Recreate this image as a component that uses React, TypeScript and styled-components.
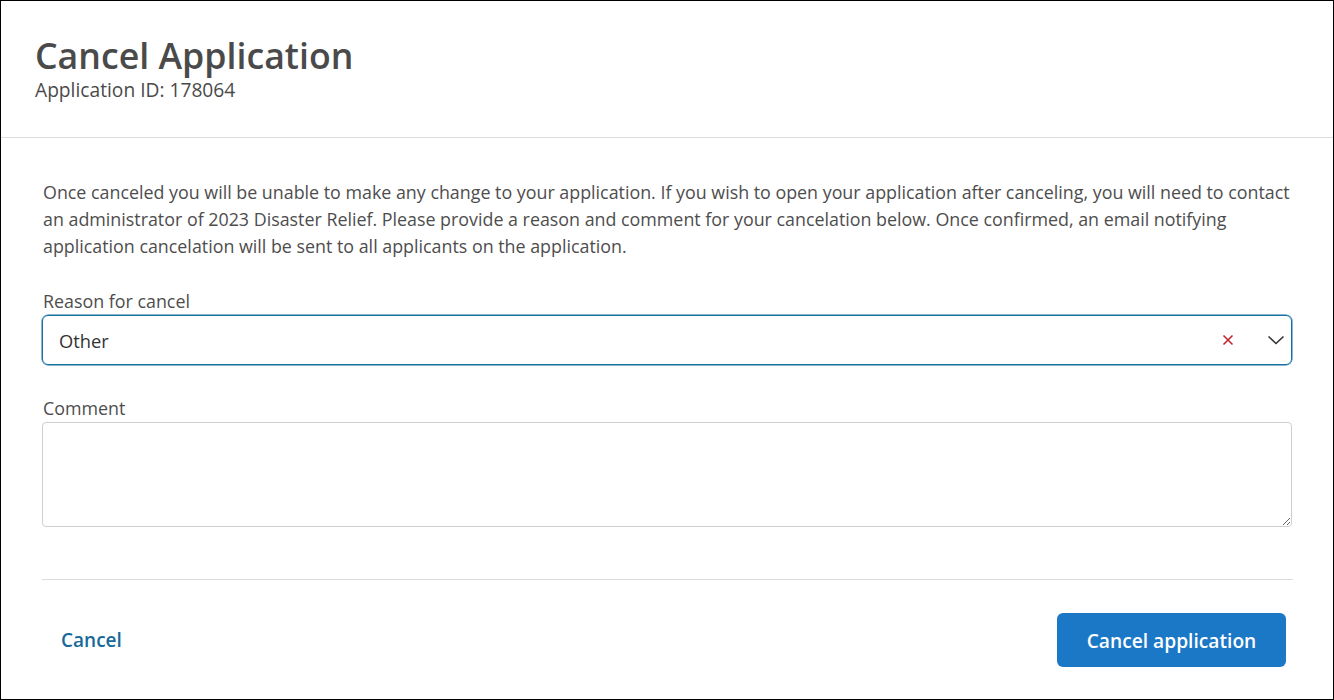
import React from "react";
import styled, { createGlobalStyle } from "styled-components";

const Global = createGlobalStyle`
  html, body { margin: 0; padding: 0; background: #fff; }
  body { font-family: "Open Sans", "Noto Sans", sans-serif; }
  * { box-sizing: border-box; }
`;

const Frame = styled.div`
  width: 1334px;
  height: 700px;
  border: 1px solid #000;
  display: flex;
  flex-direction: column;
  background: #fff;
`;

const Header = styled.header`
  padding: 31px 34px 0 34px;
  height: 137px;
  border-bottom: 1px solid #dcdcdc;
`;

const Title = styled.h1`
  margin: 0;
  font-size: 35.7px;
  line-height: 46px;
  font-weight: 600;
  color: #4a4a4a;
`;

const SubTitle = styled.div`
  font-size: 19.2px;
  line-height: 24px;
  color: #4a4a4a;
`;

const Body = styled.main`
  padding: 41px 41px 0 41px;
  display: flex;
  flex-direction: column;
`;

const Message = styled.p`
  margin: 0 0 0 1px;
  font-size: 17.85px;
  line-height: 27px;
  color: #4d4d4d;
`;

const Field = styled.div`
  display: flex;
  flex-direction: column;
  margin-top: ${(p: { $top: number }) => p.$top}px;
`;

const Label = styled.label`
  font-size: 17.85px;
  line-height: 22px;
  color: #4d4d4d;
  margin: 0 0 3px 1px;
`;

const Select = styled.div`
  height: 50px;
  border: 1px solid #1670a0;
  border-radius: 6px;
  display: flex;
  align-items: center;
  padding: 0 6px 0 16px;
  box-shadow: 0 0 0 0.5px #1670a0;
`;

const SelectValue = styled.span`
  flex: 1;
  font-size: 18.3px;
  color: #333;
`;

const IconBtn = styled.span`
  display: flex;
  align-items: center;
  justify-content: center;
  margin-left: ${(p: { $gap: number }) => p.$gap}px;
`;

const TextArea = styled.textarea`
  height: 105px;
  margin-left: 0;
  width: 1250px;
  border: 1px solid #cfcfcf;
  border-radius: 4px;
  resize: vertical;
  font-family: inherit;
  font-size: 17px;
  outline: none;
`;

const Divider = styled.hr`
  margin: 52px 0 0 0;
  width: 1251px;
  border: none;
  border-top: 1px solid #dcdcdc;
`;

const Footer = styled.footer`
  display: flex;
  justify-content: space-between;
  align-items: center;
  padding: 33px 6px 0 1px;
`;

const LinkButton = styled.button`
  background: none;
  border: none;
  padding: 0 18px;
  font-family: inherit;
  font-size: 19px;
  font-weight: 600;
  color: #17699a;
  cursor: pointer;
`;

const PrimaryButton = styled.button`
  width: 229px;
  height: 54px;
  background: #1b78c6;
  color: #fff;
  border: none;
  border-radius: 6px;
  font-family: inherit;
  font-size: 19.2px;
  font-weight: 600;
  cursor: pointer;
`;

export default function App() {
  return (
    <>
      <Global />
      <Frame>
        <Header>
          <Title>Cancel Application</Title>
          <SubTitle>Application ID: 178064</SubTitle>
        </Header>
        <Body>
          <Message>
            Once canceled you will be unable to make any change to your application. If you wish to open your application after canceling, you will need to contact an administrator of 2023 Disaster Relief. Please provide a reason and comment for your cancelation below. Once confirmed, an email notifying application cancelation will be sent to all applicants on the application.
          </Message>
          <Field $top={30}>
            <Label>Reason for cancel</Label>
            <Select>
              <SelectValue>Other</SelectValue>
              <IconBtn $gap={0}>
                <svg width="12" height="12" viewBox="0 0 12 12">
                  <path d="M1.5 1.5 L10.5 10.5 M10.5 1.5 L1.5 10.5" stroke="#c0282d" strokeWidth="1.6" fill="none" />
                </svg>
              </IconBtn>
              <IconBtn $gap={33}>
                <svg width="18" height="10" viewBox="0 0 18 10">
                  <path d="M1.5 1.5 L9 8.5 L16.5 1.5" stroke="#333" strokeWidth="1.6" fill="none" />
                </svg>
              </IconBtn>
            </Select>
          </Field>
          <Field $top={32}>
            <Label>Comment</Label>
            <TextArea />
          </Field>
          <Divider />
          <Footer>
            <LinkButton>Cancel</LinkButton>
            <PrimaryButton>Cancel application</PrimaryButton>
          </Footer>
        </Body>
      </Frame>
    </>
  );
}
